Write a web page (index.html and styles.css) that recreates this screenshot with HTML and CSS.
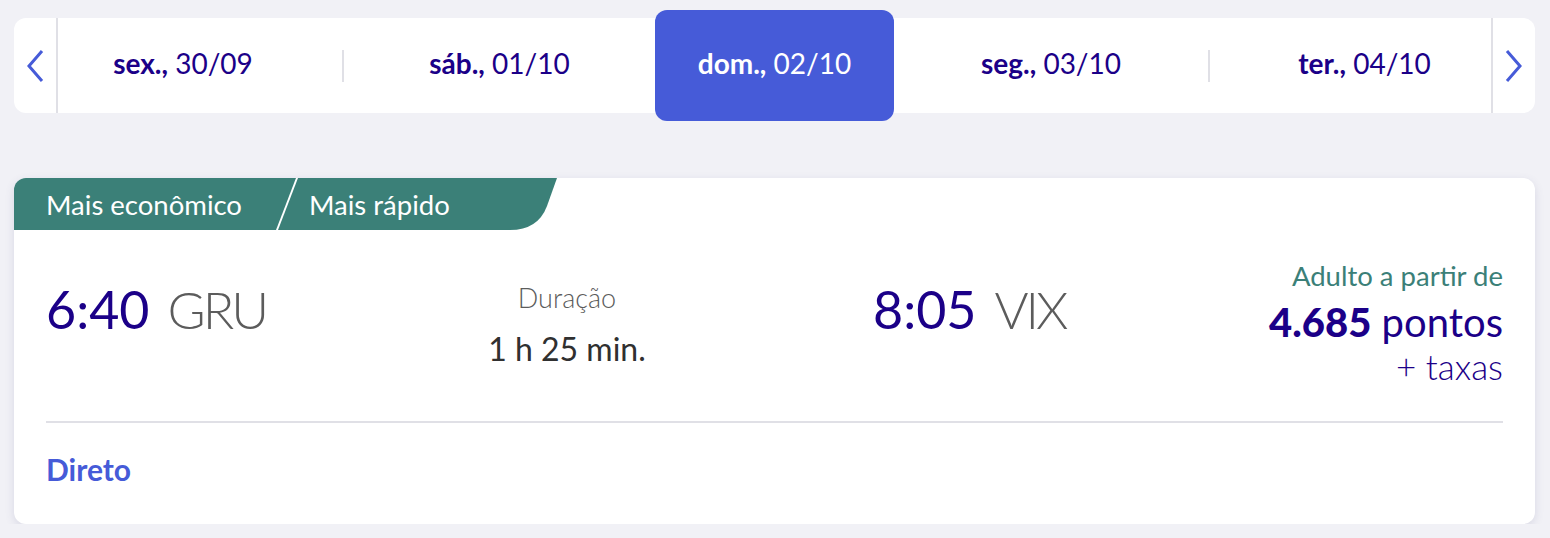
FILE: index.html
```html
<!DOCTYPE html>
<html lang="pt-BR">
<head>
    <meta charset="UTF-8">
    <meta name="viewport" content="width=device-width, initial-scale=1.0">
    <title>Voos GRU - VIX</title>
    <link rel="stylesheet" href="styles.css">
</head>
<body>
    <main class="page">
        <nav class="date-bar">
            <button class="date-arrow date-arrow--prev" aria-label="Dia anterior">
                <svg viewBox="0 0 18 34" width="18" height="34"><path d="M16 2 L3 17 L16 32"/></svg>
            </button>
            <div class="date-list">
                <a class="date-item date-item--first" href="#"><b>sex.,</b> 30/09</a>
                <span class="date-sep"></span>
                <a class="date-item" href="#"><b>sáb.,</b> 01/10</a>
                <a class="date-item date-item--active" href="#"><b>dom.,</b> 02/10</a>
                <a class="date-item" href="#"><b>seg.,</b> 03/10</a>
                <span class="date-sep"></span>
                <a class="date-item date-item--last" href="#"><b>ter.,</b> 04/10</a>
            </div>
            <button class="date-arrow date-arrow--next" aria-label="Próximo dia">
                <svg viewBox="0 0 18 34" width="18" height="34"><path d="M2 2 L15 17 L2 32"/></svg>
            </button>
        </nav>

        <article class="flight-card">
            <div class="flight-tags">
                <span class="flight-tag">Mais econômico</span>
                <span class="flight-tag-sep"></span>
                <span class="flight-tag">Mais rápido</span>
            </div>

            <div class="flight-main">
                <div class="flight-leg">
                    <span class="flight-time">6:40</span>
                    <span class="flight-airport">GRU</span>
                </div>
                <div class="flight-duration">
                    <span class="flight-duration-label">Duração</span>
                    <span class="flight-duration-value">1 h 25 min.</span>
                </div>
                <div class="flight-leg">
                    <span class="flight-time">8:05</span>
                    <span class="flight-airport">VIX</span>
                </div>
                <div class="flight-price">
                    <span class="flight-price-label">Adulto a partir de</span>
                    <span class="flight-price-value"><b>4.685</b> pontos</span>
                    <span class="flight-price-extra">+ taxas</span>
                </div>
            </div>

            <div class="flight-footer">
                <span class="flight-stops">Direto</span>
            </div>
        </article>
    </main>
</body>
</html>
```

FILE: styles.css
```css
:root {
    --background: #f1f1f6;
    --navy: #1b0088;
    --blue: #465bd8;
    --green: #3b8078;
    --gray: #5c5c5c;
    --border: #e0e0e6;
}

* {
    box-sizing: border-box;
}

body {
    margin: 0;
    background: var(--background);
    font-family: "Lato", "Noto Sans", sans-serif;
    color: var(--navy);
}

.page {
    padding: 18px 15px 0 14px;
}

/* date carousel */

.date-bar {
    display: flex;
    height: 95px;
    margin-bottom: 65px;
    background: #fff;
    border-radius: 12px;
}

.date-arrow {
    display: flex;
    align-items: center;
    justify-content: center;
    width: 44px;
    padding: 0;
    border: none;
    background: none;
    cursor: pointer;
}

.date-arrow--prev {
    border-right: 2px solid var(--border);
}

.date-arrow--next {
    border-left: 2px solid var(--border);
}

.date-arrow svg path {
    fill: none;
    stroke: var(--blue);
    stroke-width: 3;
}

.date-list {
    flex: 1;
    display: grid;
    grid-template-columns: 284px 2px 311px 239px 314px 2px 281px;
    align-items: center;
}

.date-item {
    display: flex;
    align-items: center;
    justify-content: center;
    height: 100%;
    padding-bottom: 5px;
    font-size: 28px;
    color: var(--navy);
    text-decoration: none;
    white-space: pre;
}

.date-item b {
    font-weight: 700;
}

.date-item--first {
    padding-right: 34px;
}

.date-item--last {
    padding-left: 28px;
}

.date-item--active {
    height: auto;
    align-self: stretch;
    margin: -8px 0;
    background: var(--blue);
    border-radius: 12px;
    color: #fff;
}

.date-sep {
    height: 32px;
    background: var(--border);
}

/* flight card */

.flight-card {
    height: 346px;
    background: #fff;
    border-radius: 12px;
    box-shadow: 0 3px 10px rgba(70, 70, 130, 0.14);
    overflow: hidden;
}

.flight-tags {
    display: flex;
    align-items: center;
    width: 543px;
    height: 52px;
    padding-left: 32px;
    background: var(--green);
    clip-path: path("M0 0 H543 L533 28 Q 524 52 496 52 H0 Z");
}

.flight-tag {
    font-size: 27.5px;
    color: #fff;
}

.flight-tag-sep {
    width: 2px;
    height: 100%;
    margin: 0 21px 0 44px;
    background: #fff;
    transform: skewX(-21deg);
}

.flight-main {
    display: grid;
    grid-template-columns: 215px 612px auto 1fr;
    align-items: start;
    height: 193px;
    margin: 0 32px;
    padding-top: 29px;
    border-bottom: 2px solid var(--border);
}

.flight-leg {
    display: flex;
    align-items: baseline;
    gap: 18px;
    padding-top: 19px;
}

.flight-time {
    font-size: 52px;
    font-weight: 400;
    color: var(--navy);
}

.flight-airport {
    font-size: 52px;
    font-weight: 300;
    letter-spacing: -3px;
    color: var(--gray);
}

.flight-duration {
    display: flex;
    flex-direction: column;
    align-items: center;
    gap: 15px;
    padding-top: 22px;
}

.flight-duration-label {
    font-size: 27px;
    font-weight: 300;
    color: var(--gray);
}

.flight-duration-value {
    font-size: 32px;
    font-weight: 400;
    color: #303030;
}

.flight-price {
    display: flex;
    flex-direction: column;
    align-items: flex-end;
}

.flight-price-label {
    font-size: 27.5px;
    color: var(--green);
}

.flight-price-value {
    margin-top: 8px;
    font-size: 40px;
    line-height: 1.1;
}

.flight-price-value b {
    font-weight: 900;
}

.flight-price-extra {
    margin-top: 3px;
    font-size: 35px;
    font-weight: 300;
    line-height: 1.1;
}

.flight-footer {
    padding: 28px 32px 0;
}

.flight-stops {
    font-size: 30px;
    font-weight: 700;
    color: var(--blue);
}
```
